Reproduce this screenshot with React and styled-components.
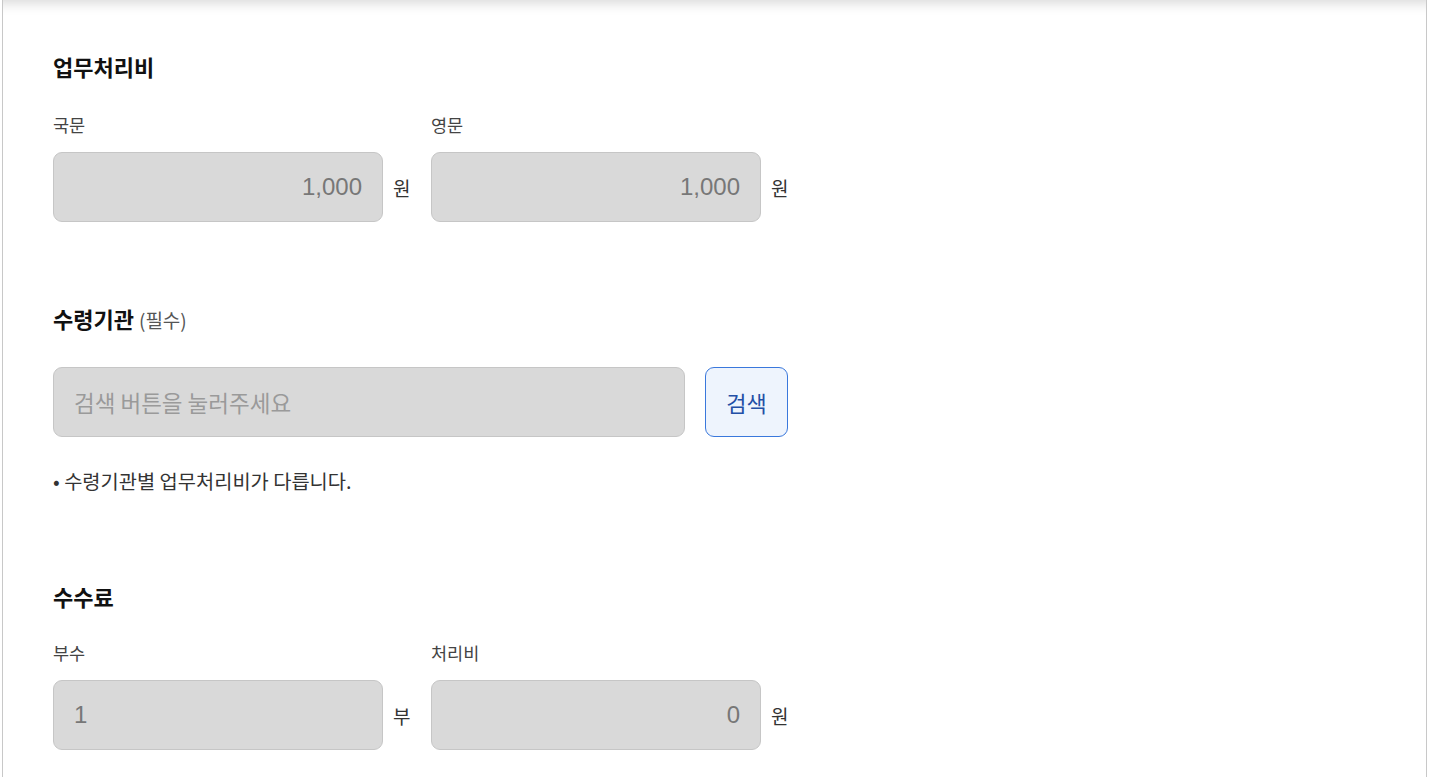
import React from 'react';
import styled, { createGlobalStyle } from 'styled-components';

const GlobalStyle = createGlobalStyle`
    html, body {
        margin: 0;
        padding: 0;
        background: #ffffff;
    }
    body {
        font-family: "Liberation Sans", "Noto Sans CJK KR", sans-serif;
        color: #222;
    }
`;

const Page = styled.div`
    position: relative;
    margin-left: 2px;
    width: 1425px;
    min-height: 777px;
    border-left: 1px solid #c8c8c8;
    border-right: 1px solid #c8c8c8;
    padding: 51px 50px 0;
    box-sizing: border-box;
    overflow: hidden;

    &::before {
        content: '';
        position: absolute;
        top: -20px;
        left: -10px;
        right: -10px;
        height: 20px;
        box-shadow: 0 2px 14px rgba(0, 0, 0, 0.18);
    }
`;

const Section = styled.section`
    padding-top: ${(p) => p.top || 0}px;
`;

const Title = styled.h2`
    margin: 0;
    font-size: 22px;
    font-weight: 700;
    color: #111;
    line-height: 30px;
    font-family: "Noto Sans CJK KR", sans-serif;
`;

const Sub = styled.span`
    font-size: 19px;
    font-weight: 400;
    color: #555;
`;

const Row = styled.div`
    display: flex;
    align-items: flex-end;
    gap: ${(p) => p.spacing || 21}px;
    margin-top: ${(p) => p.gap || 0}px;
`;

const Field = styled.div`
    display: flex;
    flex-direction: column;
`;

const Label = styled.label`
    font-size: 17.5px;
    color: #444;
    line-height: 24px;
    margin-bottom: 15px;
    font-family: "Noto Sans CJK KR", sans-serif;
`;

const InputLine = styled.div`
    display: flex;
    align-items: center;
    gap: 10px;
`;

const Box = styled.div`
    width: ${(p) => p.width}px;
    height: 70px;
    box-sizing: border-box;
    background: #d9d9d9;
    border: 1px solid #c6c6c6;
    border-radius: 9px;
    display: flex;
    align-items: center;
    justify-content: ${(p) => (p.align === 'left' ? 'flex-start' : 'flex-end')};
    padding: 0 20px;
    font-size: 24px;
    color: #777;
`;

const Placeholder = styled.span`
    font-size: 22.5px;
    color: #9a9a9a;
    font-family: "Noto Sans CJK KR", sans-serif;
`;

const Unit = styled.span`
    font-size: 19px;
    color: #333;
    width: 17px;
    font-family: "Noto Sans CJK KR", sans-serif;
`;

const SearchButton = styled.button`
    width: 83px;
    height: 70px;
    box-sizing: border-box;
    border: 1px solid #3a78dc;
    border-radius: 9px;
    background: #eef4fd;
    color: #234fa6;
    font-size: 22px;
    font-family: "Noto Sans CJK KR", sans-serif;
    padding: 0;
    cursor: pointer;
`;

const Note = styled.p`
    margin: 29px 0 0;
    font-size: 19.8px;
    color: #333;
    line-height: 30px;
    font-family: "Noto Sans CJK KR", sans-serif;
`;

const MoneyField = ({ label, value, unit, width = 330, align }) => (
    <Field>
        <Label>{label}</Label>
        <InputLine>
            <Box width={width} align={align}>{value}</Box>
            <Unit>{unit}</Unit>
        </InputLine>
    </Field>
);

export default function App() {
    return (
        <>
            <GlobalStyle />
            <Page>
                <Section>
                    <Title>업무처리비</Title>
                    <Row gap={32}>
                        <MoneyField label="국문" value="1,000" unit="원" />
                        <MoneyField label="영문" value="1,000" unit="원" />
                    </Row>
                </Section>

                <Section top={81}>
                    <Title>
                        수령기관 <Sub>(필수)</Sub>
                    </Title>
                    <Row gap={32} spacing={20}>
                        <Box width={632} align="left">
                            <Placeholder>검색 버튼을 눌러주세요</Placeholder>
                        </Box>
                        <SearchButton>검색</SearchButton>
                    </Row>
                    <Note>• 수령기관별 업무처리비가 다릅니다.</Note>
                </Section>

                <Section top={85}>
                    <Title>수수료</Title>
                    <Row gap={30}>
                        <MoneyField label="부수" value="1" unit="부" align="left" />
                        <MoneyField label="처리비" value="0" unit="원" />
                    </Row>
                </Section>
            </Page>
        </>
    );
}
